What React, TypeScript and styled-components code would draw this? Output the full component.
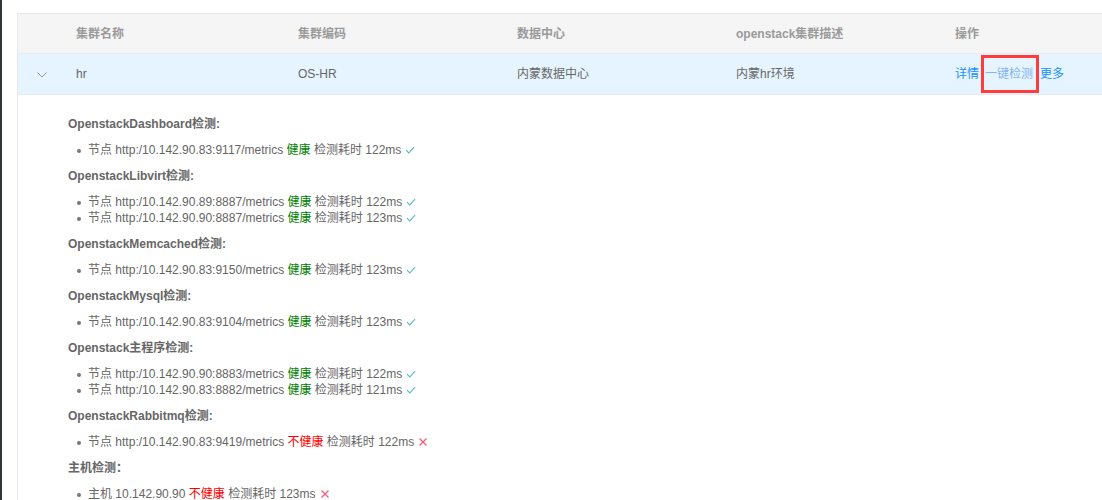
import React from "react";
import styled, { createGlobalStyle } from "styled-components";

const Global = createGlobalStyle`
  html, body { margin: 0; padding: 0; background: #fff; }
  body {
    font-family: "Liberation Sans", "Noto Sans CJK SC", sans-serif;
    font-size: 12px;
    color: #666;
  }
`;

const Page = styled.div`
  display: flex;
  width: 1102px;
  height: 500px;
  overflow: hidden;
`;

const Edge = styled.div`
  width: 2px;
  flex: none;
  background: #2d3638;
`;

const Main = styled.div`
  flex: 1;
  padding: 13px 0 0 15px;
  min-width: 0;
`;

const Table = styled.div`
  border-top: 1px solid #e8e8e8;
  border-left: 1px solid #e8e8e8;
  height: 600px;
`;

const cols = "42px 222px 219px 219px 219px 1fr";

const HeadRow = styled.div`
  display: grid;
  grid-template-columns: ${cols};
  height: 39px;
  align-items: center;
  background: #f5f5f5;
  border-bottom: 1px solid #ebebeb;
`;

const HeadCell = styled.div`
  padding-left: 16px;
  font-weight: bold;
  color: #9a9a9a;
  line-height: 16px;
`;

const DataRow = styled.div`
  display: grid;
  grid-template-columns: ${cols};
  height: 40px;
  align-items: center;
  background: #e6f4ff;
  border-bottom: 1px solid #e3eaf0;
`;

const Cell = styled.div`
  padding-left: 16px;
  color: #666;
  line-height: 16px;
  white-space: nowrap;
`;

const ExpandCell = styled.div`
  display: flex;
  justify-content: center;
  padding-left: 6px;
  padding-top: 2px;
`;

const Actions = styled.div`
  padding-left: 16px;
  display: flex;
  align-items: center;
  line-height: 16px;
  white-space: nowrap;
`;

const Link = styled.span`
  color: #1890ff;
`;

const Marked = styled.span`
  position: relative;
  margin: 0 7px 0 6px;
  color: #7fb6f0;
  &::after {
    content: "";
    position: absolute;
    left: -4px;
    right: -6px;
    top: -11px;
    bottom: -11px;
    border: 3px solid #ff3b3b;
  }
`;

const Detail = styled.div`
  padding: 21px 0 0 50px;
`;

const Section = styled.div``;

const Title = styled.div`
  font-weight: bold;
  color: #666;
  line-height: 16px;
  margin-bottom: 10px;
`;

const List = styled.ul`
  margin: 0 0 10px;
  padding: 0 0 0 20px;
  list-style: none;
`;

const Item = styled.li`
  position: relative;
  line-height: 16px;
  color: #666;
  white-space: nowrap;
  &::before {
    content: "";
    position: absolute;
    left: -11px;
    top: 7px;
    width: 4px;
    height: 4px;
    border-radius: 50%;
    background: #777;
  }
`;

const Status = styled.span<{ $ok: boolean }>`
  color: ${(p) => (p.$ok ? "#008000" : "#ff0000")};
`;

const Mark = styled.span`
  display: inline-flex;
  vertical-align: -1px;
  margin-left: 4px;
`;

type Node = { label: string; addr: string; ok: boolean; ms: number };
type Group = { title: string; nodes: Node[] };

const groups: Group[] = [
  { title: "OpenstackDashboard检测:", nodes: [{ label: "节点", addr: "http:/10.142.90.83:9117/metrics", ok: true, ms: 122 }] },
  {
    title: "OpenstackLibvirt检测:",
    nodes: [
      { label: "节点", addr: "http:/10.142.90.89:8887/metrics", ok: true, ms: 122 },
      { label: "节点", addr: "http:/10.142.90.90:8887/metrics", ok: true, ms: 123 },
    ],
  },
  { title: "OpenstackMemcached检测:", nodes: [{ label: "节点", addr: "http:/10.142.90.83:9150/metrics", ok: true, ms: 123 }] },
  { title: "OpenstackMysql检测:", nodes: [{ label: "节点", addr: "http:/10.142.90.83:9104/metrics", ok: true, ms: 123 }] },
  {
    title: "Openstack主程序检测:",
    nodes: [
      { label: "节点", addr: "http:/10.142.90.90:8883/metrics", ok: true, ms: 122 },
      { label: "节点", addr: "http:/10.142.90.83:8882/metrics", ok: true, ms: 121 },
    ],
  },
  { title: "OpenstackRabbitmq检测:", nodes: [{ label: "节点", addr: "http:/10.142.90.83:9419/metrics", ok: false, ms: 122 }] },
  { title: "主机检测：", nodes: [{ label: "主机", addr: "10.142.90.90", ok: false, ms: 123 }] },
];

const Check = () => (
  <svg width="10" height="10" viewBox="0 0 10 10" fill="none">
    <path d="M1 5.2 L3.8 8 L9 2.2" stroke="#4fb8c8" strokeWidth="1.1" />
  </svg>
);

const Cross = () => (
  <svg width="10" height="10" viewBox="0 0 10 10" fill="none">
    <path d="M1.5 1.5 L8.5 8.5 M8.5 1.5 L1.5 8.5" stroke="#ff5577" strokeWidth="1.2" />
  </svg>
);

const Chevron = () => (
  <svg width="10" height="6" viewBox="0 0 10 6" fill="none">
    <path d="M0.5 0.5 L5 5 L9.5 0.5" stroke="#9a9a9a" strokeWidth="1" />
  </svg>
);

export default function App() {
  return (
    <>
      <Global />
      <Page>
        <Edge />
        <Main>
          <Table>
            <HeadRow>
              <div />
              <HeadCell>集群名称</HeadCell>
              <HeadCell>集群编码</HeadCell>
              <HeadCell>数据中心</HeadCell>
              <HeadCell>openstack集群描述</HeadCell>
              <HeadCell>操作</HeadCell>
            </HeadRow>
            <DataRow>
              <ExpandCell>
                <Chevron />
              </ExpandCell>
              <Cell>hr</Cell>
              <Cell>OS-HR</Cell>
              <Cell>内蒙数据中心</Cell>
              <Cell>内蒙hr环境</Cell>
              <Actions>
                <Link>详情</Link>
                <Marked>一键检测</Marked>
                <Link>更多</Link>
              </Actions>
            </DataRow>
            <Detail>
              {groups.map((g) => (
                <Section key={g.title}>
                  <Title>{g.title}</Title>
                  <List>
                    {g.nodes.map((n) => (
                      <Item key={n.addr}>
                        {n.label} {n.addr} <Status $ok={n.ok}>{n.ok ? "健康" : "不健康"}</Status> 检测耗时 {n.ms}ms
                        <Mark>{n.ok ? <Check /> : <Cross />}</Mark>
                      </Item>
                    ))}
                  </List>
                </Section>
              ))}
            </Detail>
          </Table>
        </Main>
      </Page>
    </>
  );
}
